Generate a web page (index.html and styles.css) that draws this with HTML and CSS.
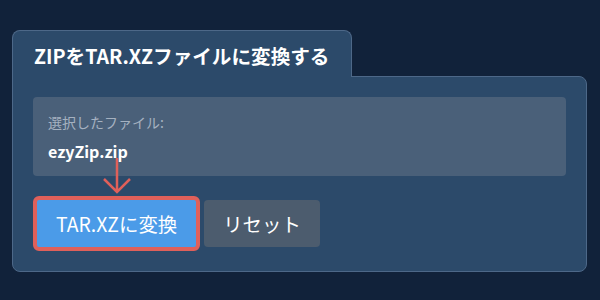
FILE: index.html
```html
<!DOCTYPE html>
<html lang="ja">
<head>
    <meta charset="UTF-8">
    <meta name="viewport" content="width=device-width, initial-scale=1.0">
    <title>ZIPをTAR.XZに変換</title>
    <link rel="stylesheet" href="styles.css">
</head>
<body>
    <div class="converter">
        <div class="tab">ZIPをTAR.XZファイルに変換する</div>
        <div class="panel">
            <div class="file-info">
                <div class="file-label">選択したファイル:</div>
                <div class="file-name">ezyZip.zip</div>
            </div>
            <div class="actions">
                <!-- annotation arrow pointing at the convert button -->
                <svg class="pointer" width="30" height="36" viewBox="0 0 30 36">
                    <path d="M15 0 V34 M2 21 L15 34 L28 21" fill="none" stroke="#e0605a" stroke-width="2.5"/>
                </svg>
                <button class="btn btn-convert">TAR.XZに変換</button>
                <button class="btn btn-reset">リセット</button>
            </div>
        </div>
    </div>
</body>
</html>
```

FILE: styles.css
```css
body {
    margin: 0;
    padding: 30px 13px 0 12px;
    background: #11223a;
    font-family: "Noto Sans CJK JP", "Noto Sans", sans-serif;
    color: #fff;
}
.converter {
    display: flex;
    flex-direction: column;
    align-items: flex-start;
}
.tab {
    position: relative;
    z-index: 1;
    margin-bottom: -1px;
    padding: 11px 22px 7px 21px;
    background: #2c4a6a;
    border: 1px solid #4d6888;
    border-bottom: none;
    border-radius: 8px 8px 0 0;
    font-size: 19.6px;
    font-weight: bold;
    line-height: 28px;
}
.panel {
    align-self: stretch;
    padding: 20px;
    background: #2c4a6a;
    border: 1px solid #4d6888;
    border-radius: 0 8px 8px 8px;
}
.file-info {
    padding: 15px 15px 14px;
    background: #4a6079;
    border-radius: 4px;
}
.file-label {
    font-size: 14px;
    line-height: 20px;
    color: #a5b1c0;
    margin-bottom: 8px;
}
.file-name {
    font-size: 16px;
    font-weight: bold;
    line-height: 22px;
}
.actions {
    position: relative;
    display: flex;
    align-items: center;
    gap: 4px;
    margin-top: 20px;
}
.pointer {
    position: absolute;
    left: 69px;
    top: -38px;
}
.btn {
    padding: 10px 19px;
    border: none;
    border-radius: 4px;
    font-family: inherit;
    font-size: 19.4px;
    line-height: 27px;
    color: #fff;
}
.btn-convert {
    background: #4b9be8;
    border: 4px solid #e0605a;
    border-radius: 6px;
}
.btn-reset {
    background: #4c5c6e;
}
```
